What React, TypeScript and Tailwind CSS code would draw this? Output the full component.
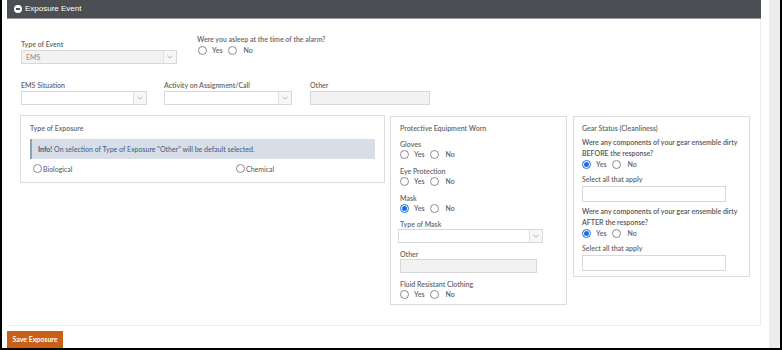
import React from "react";

const font = { fontFamily: "Lato, 'Open Sans', sans-serif" };

function Radio({ checked = false }: { checked?: boolean }) {
  return checked ? (
    <span className="inline-flex w-[9px] h-[9px] rounded-full border border-[#1a6fe0] bg-white items-center justify-center shrink-0">
      <span className="block w-[5px] h-[5px] rounded-full bg-[#1a6fe0]" />
    </span>
  ) : (
    <span className="inline-block w-[9px] h-[9px] rounded-full border border-[#8a8a8a] bg-white shrink-0" />
  );
}

function YesNo({ yes = false }: { yes?: boolean }) {
  return (
    <div className="flex items-center h-[11px] text-[7px] font-semibold text-[#666] leading-[11px]">
      <Radio checked={yes} />
      <span className="ml-[5px]">Yes</span>
      <span className="ml-[6px] flex"><Radio /></span>
      <span className="ml-[6px]">No</span>
    </div>
  );
}

function Chevron() {
  return (
    <svg width="6" height="4" viewBox="0 0 6 4" className="block">
      <path d="M0.5 0.8 L3 3.2 L5.5 0.8" fill="none" stroke="#a0a0a0" strokeWidth="0.8" />
    </svg>
  );
}

function Select({ w, value, disabled = false }: { w: string; value?: string; disabled?: boolean }) {
  return (
    <div className={`${w} h-[14px] flex border border-[#d8d8d8] ${disabled ? "bg-[#f2f2f2]" : "bg-white"}`}>
      <div className="flex-1 pl-[4px] text-[7px] leading-[13px] text-[#8a8a8a]">{value}</div>
      <div className="w-[13px] border-l border-[#e0e0e0] bg-[#f7f7f7] flex items-center justify-center">
        <Chevron />
      </div>
    </div>
  );
}

function Label({ children, className = "" }: { children: React.ReactNode; className?: string }) {
  return <div className={`text-[7px] leading-[10px] font-semibold text-[#666] ${className}`}>{children}</div>;
}

export default function App() {
  return (
    <div style={font} className="w-[782px] h-[350px] bg-white flex border-l-2 border-r-2 border-b-2 border-black overflow-hidden">
      <div className="w-[767px] flex flex-col pl-[5px] pr-[6px]">
        <div className="h-[19px] bg-[#4b4f54] border-b border-[#9a9da1] flex items-center pl-[7px]">
          <span className="w-[8px] h-[8px] rounded-full bg-white flex items-center justify-center">
            <span className="block w-[4px] h-[1.5px] bg-[#4b4f54]" />
          </span>
          <span className="ml-[3px] text-white text-[8px]" style={{ fontFamily: "'Liberation Sans', Arial, sans-serif" }}>
            Exposure Event
          </span>
        </div>
        <div className="h-[308px] border-r border-b border-[#ececec] flex flex-col">
          {/* Row 1 */}
          <div className="flex items-start mt-[15px] pl-[14px]">
            <div className="mt-[5px] w-[156px]">
              <Label>Type of Event</Label>
              <div className="mt-[1px]">
                <Select w="w-[156px]" value="EMS" disabled />
              </div>
            </div>
            <div className="ml-[20px]">
              <Label>Were you asleep at the time of the alarm?</Label>
              <div className="mt-[1px] pl-[1px]">
                <YesNo />
              </div>
            </div>
          </div>
          {/* Row 2 */}
          <div className="flex items-start mt-[16px] pl-[14px]">
            <div className="w-[126px]">
              <Label>EMS Situation</Label>
              <div className="mt-[1px]">
                <Select w="w-[126px]" />
              </div>
            </div>
            <div className="ml-[17px] w-[128px]">
              <Label>Activity on Assignment/Call</Label>
              <div className="mt-[1px]">
                <Select w="w-[128px]" />
              </div>
            </div>
            <div className="ml-[18px] w-[120px]">
              <Label>Other</Label>
              <div className="mt-[1px] h-[14px] border border-[#d8d8d8] bg-[#f2f2f2]" />
            </div>
          </div>
          {/* Row 3 */}
          <div className="flex items-start mt-[10px] pl-[13px]">
            <div className="w-[365px] h-[68px] border border-[#dcdcdc] px-[9px] pt-[7px]">
              <Label>Type of Exposure</Label>
              <div className="mt-[6px] h-[20px] bg-[#d7dee8] border-l-2 border-[#8ea0b6] pl-[6px] text-[7px] leading-[20px] text-[#3d5a7e]">
                <span className="font-bold">Info!</span> On selection of Type of Exposure "Other" will be default selected.
              </div>
              <div className="flex items-center mt-[5px] pl-[3px] text-[7px] text-[#555] h-[10px]">
                <div className="w-[203px] flex items-center">
                  <Radio />
                  <span className="ml-[1px]">Biological</span>
                </div>
                <div className="flex items-center">
                  <Radio />
                  <span className="ml-[1px]">Chemical</span>
                </div>
              </div>
            </div>
            <div className="ml-[5px] mt-[1px] w-[177px] h-[189px] border border-[#dcdcdc] px-[9px] pt-[6px]">
              <Label>Protective Equipment Worn</Label>
              <Label className="mt-[6px]">Gloves</Label>
              <YesNo />
              <Label className="mt-[6px]">Eye Protection</Label>
              <YesNo />
              <Label className="mt-[6px]">Mask</Label>
              <YesNo yes />
              <Label className="mt-[5px]">Type of Mask</Label>
              <div className="-ml-[2px]">
                <Select w="w-[145px]" />
              </div>
              <Label className="mt-[6px]">Other</Label>
              <div className="w-[137px] h-[14px] border border-[#d8d8d8] bg-[#f2f2f2]" />
              <Label className="mt-[6px]">Fluid Resistant Clothing</Label>
              <YesNo />
            </div>
            <div className="ml-[6px] mt-[1px] w-[177px] h-[161px] border border-[#dcdcdc] px-[8px] pt-[6px]">
              <Label>Gear Status (Cleanliness)</Label>
              <div className="mt-[4px] text-[7px] leading-[11px] font-semibold text-[#555]">
                Were any components of your gear ensemble dirty
                <br />
                BEFORE the response?
              </div>
              <YesNo yes />
              <Label className="mt-[4px]">Select all that apply</Label>
              <div className="mt-[2px] w-[144px] h-[16px] border border-[#d8d8d8] bg-white" />
              <div className="mt-[4px] text-[7px] leading-[11px] font-semibold text-[#555]">
                Were any components of your gear ensemble dirty
                <br />
                AFTER the response?
              </div>
              <YesNo yes />
              <Label className="mt-[4px]">Select all that apply</Label>
              <div className="mt-[2px] w-[144px] h-[16px] border border-[#d8d8d8] bg-white" />
            </div>
          </div>
        </div>
        <div className="mt-[5px]">
          <div className="w-[56px] h-[17px] bg-[#c9601a] text-white text-[7px] font-bold flex items-center justify-center">
            Save Exposure
          </div>
        </div>
      </div>
      <div className="w-[2px]" />
      <div className="w-[11px] bg-[#ececec]" />
    </div>
  );
}
